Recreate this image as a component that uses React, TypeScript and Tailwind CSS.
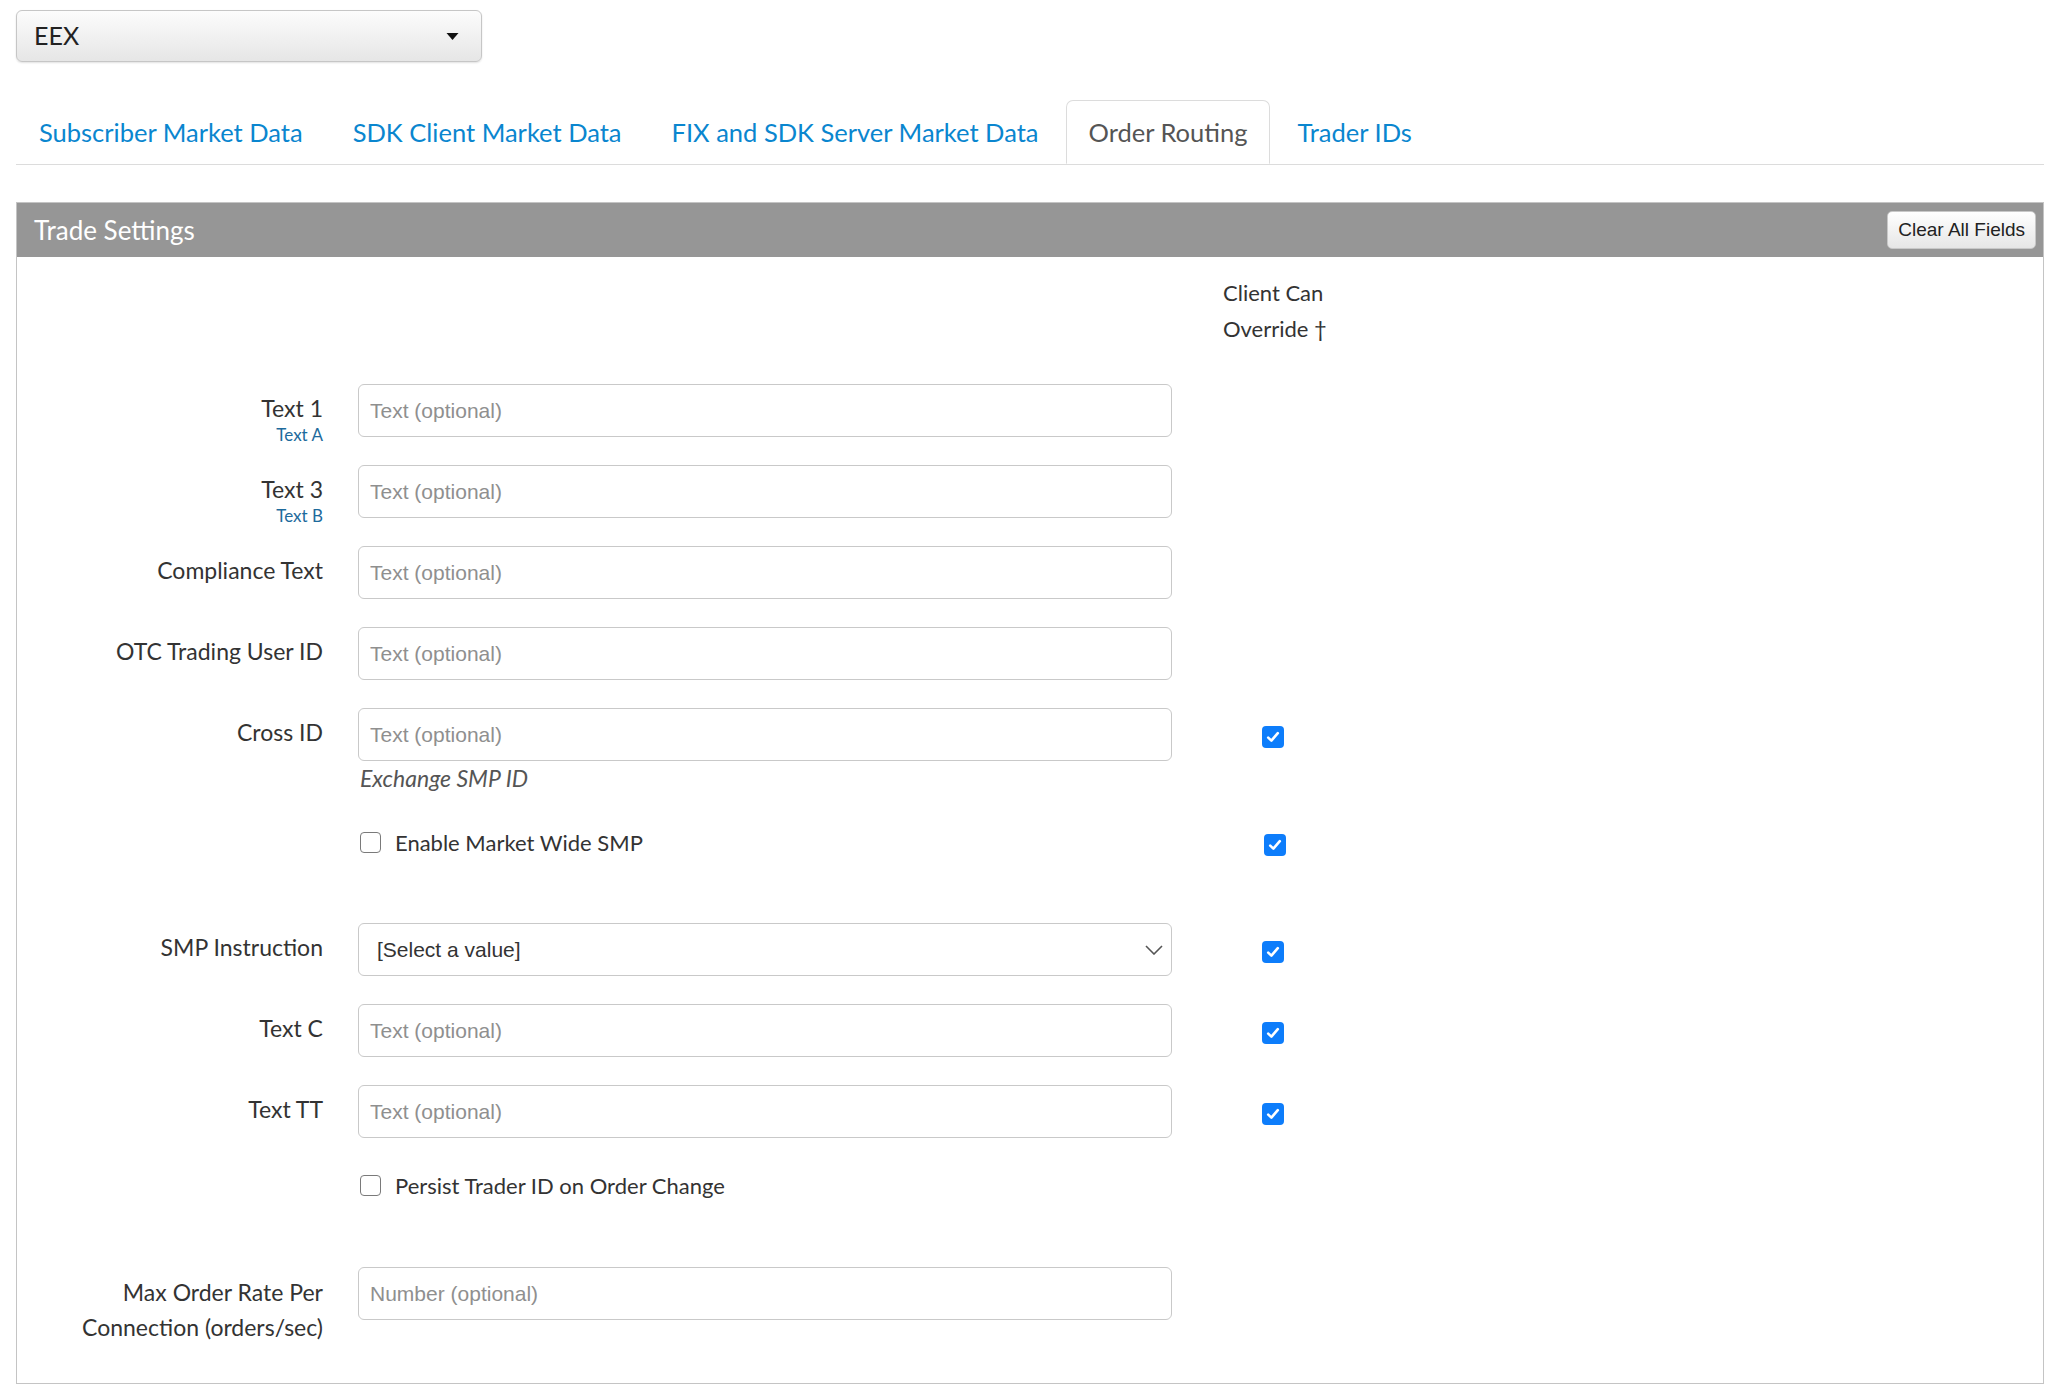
import React from "react";

const sans = "font-['Lato','Noto_Sans',sans-serif]";
const helv = "font-['Liberation_Sans',Arial,sans-serif]";

const tabs = [
	{ label: "Subscriber Market Data" },
	{ label: "SDK Client Market Data" },
	{ label: "FIX and SDK Server Market Data" },
	{ label: "Order Routing", active: true },
	{ label: "Trader IDs" },
];

function Checkbox({ checked }: { checked?: boolean }) {
	if (checked) {
		return (
			<span className="flex h-[22px] w-[22px] items-center justify-center rounded-[4px] bg-[#0d7dfb]">
				<svg viewBox="0 0 16 16" className="h-[16px] w-[16px]">
					<path
						d="M3.2 8.6 L6.4 11.6 L12.8 4.2"
						fill="none"
						stroke="white"
						strokeWidth="2.6"
						strokeLinecap="round"
						strokeLinejoin="round"
					/>
				</svg>
			</span>
		);
	}
	return (
		<span className="block h-[21px] w-[21px] rounded-[4px] border-[1.5px] border-[#7a7a7a] bg-white" />
	);
}

function TextInput({ placeholder = "Text (optional)" }: { placeholder?: string }) {
	return (
		<input
			placeholder={placeholder}
			className={`h-[53px] w-[814px] rounded-[6px] border border-[#c9c9c9] bg-white px-[11px] text-[21px] text-[#333] placeholder:text-[#8f8f8f] outline-none ${helv}`}
		/>
	);
}

/* 行: ラベル / 入力 / 上書きチェック */
function Row({
	label,
	sub,
	override,
	className = "",
	children,
}: {
	label: React.ReactNode;
	sub?: string;
	override?: boolean;
	className?: string;
	children: React.ReactNode;
}) {
	return (
		<div className={`flex h-[53px] items-start ${className}`}>
			<div className="flex w-[306px] shrink-0 flex-col items-end pt-[8px] text-right">
				<span className="text-[23px] leading-[33px] text-[#333]">{label}</span>
				{sub && (
					<span className="text-[17px] leading-[20px] text-[#1d6a9c]">{sub}</span>
				)}
			</div>
			<div className="ml-[35px] shrink-0">{children}</div>
			{override && (
				<div className="ml-[90px] pt-[18px]">
					<Checkbox checked />
				</div>
			)}
		</div>
	);
}

function CheckRow({
	label,
	override,
	className = "",
}: {
	label: string;
	override?: boolean;
	className?: string;
}) {
	return (
		<div className={`flex h-[30px] items-center ${className}`}>
			<div className="ml-[343px] flex w-[814px] items-center gap-[14px]">
				<Checkbox />
				<span className="text-[22px] text-[#333]">{label}</span>
			</div>
			{override && (
				<div className="ml-[90px] pt-[6px]">
					<Checkbox checked />
				</div>
			)}
		</div>
	);
}

export default function App() {
	return (
		<div className={`min-h-[1386px] bg-white px-[16px] pt-[10px] ${sans}`}>
			{/* 取引所セレクタ */}
			<div className="flex h-[52px] w-[466px] items-center justify-between rounded-[6px] border border-[#c6c6c6] bg-gradient-to-b from-[#fcfcfc] to-[#e6e6e6] pl-[17px] pr-[22px] shadow-[0_1px_2px_rgba(0,0,0,0.12)]">
				<span className="text-[25px] text-[#222]">EEX</span>
				<svg viewBox="0 0 12 7" className="h-[7px] w-[13px]">
					<path d="M0 0 L12 0 L6 7 Z" fill="#111" />
				</svg>
			</div>

			{/* タブ */}
			<div className="mt-[38px] flex border-b border-[#dcdcdc]">
				{tabs.map((t) =>
					t.active ? (
						<div
							key={t.label}
							className="-mb-px mr-[4px] flex h-[64px] items-center rounded-t-[7px] border border-[#dcdcdc] border-b-white bg-white px-[22px] text-[25.5px] text-[#555]"
						>
							{t.label}
						</div>
					) : (
						<div
							key={t.label}
							className="mr-[4px] flex h-[64px] items-center border border-transparent px-[22px] text-[25.5px] text-[#0a86cf]"
						>
							{t.label}
						</div>
					),
				)}
			</div>

			{/* Trade Settings パネル */}
			<div className="mt-[37px] border border-[#c4c4c4]">
				<div className="flex h-[54px] items-center justify-between bg-[#969696] pl-[17px] pr-[7px]">
					<span className="text-[26px] text-white">Trade Settings</span>
					<button
						className={`h-[38px] rounded-[5px] border border-[#c8c8c8] bg-gradient-to-b from-white to-[#e6e6e6] px-[10px] text-[19px] text-[#222] ${helv}`}
					>
						Clear All Fields
					</button>
				</div>

				<div className="pb-[38px] pt-[18px]">
					<div className="ml-[1206px] text-[22px] leading-[36px] text-[#333]">
						<div>Client Can</div>
						<div>Override †</div>
					</div>

					<Row label="Text 1" sub="Text A" className="mt-[37px]">
						<TextInput />
					</Row>
					<Row label="Text 3" sub="Text B" className="mt-[28px]">
						<TextInput />
					</Row>
					<Row label="Compliance Text" className="mt-[28px]">
						<TextInput />
					</Row>
					<Row label="OTC Trading User ID" className="mt-[28px]">
						<TextInput />
					</Row>
					<Row label="Cross ID" override className="mt-[28px]">
						<TextInput />
					</Row>
					<div className="ml-[343px] mt-[2px] h-[30px] text-[23px] italic leading-[30px] text-[#555]">
						Exchange SMP ID
					</div>

					<CheckRow label="Enable Market Wide SMP" override className="mt-[34px]" />

					<Row label="SMP Instruction" override className="mt-[66px]">
						<div
							className={`flex h-[53px] w-[814px] items-center justify-between rounded-[6px] border border-[#c9c9c9] bg-white pl-[18px] pr-[8px] text-[21px] text-[#333] ${helv}`}
						>
							<span>[Select a value]</span>
							<svg viewBox="0 0 18 10" className="h-[10px] w-[18px]">
								<path
									d="M1 1 L9 9 L17 1"
									fill="none"
									stroke="#555"
									strokeWidth="1.6"
								/>
							</svg>
						</div>
					</Row>
					<Row label="Text C" override className="mt-[28px]">
						<TextInput />
					</Row>
					<Row label="Text TT" override className="mt-[28px]">
						<TextInput />
					</Row>

					<CheckRow label="Persist Trader ID on Order Change" className="mt-[32px]" />

					<div className="mt-[67px] flex items-start">
						<div className="w-[306px] shrink-0 pt-[8px] text-right text-[23px] leading-[35px] text-[#333]">
							<div>Max Order Rate Per</div>
							<div>Connection (orders/sec)</div>
						</div>
						<div className="ml-[35px]">
							<TextInput placeholder="Number (optional)" />
						</div>
					</div>
				</div>
			</div>
		</div>
	);
}
